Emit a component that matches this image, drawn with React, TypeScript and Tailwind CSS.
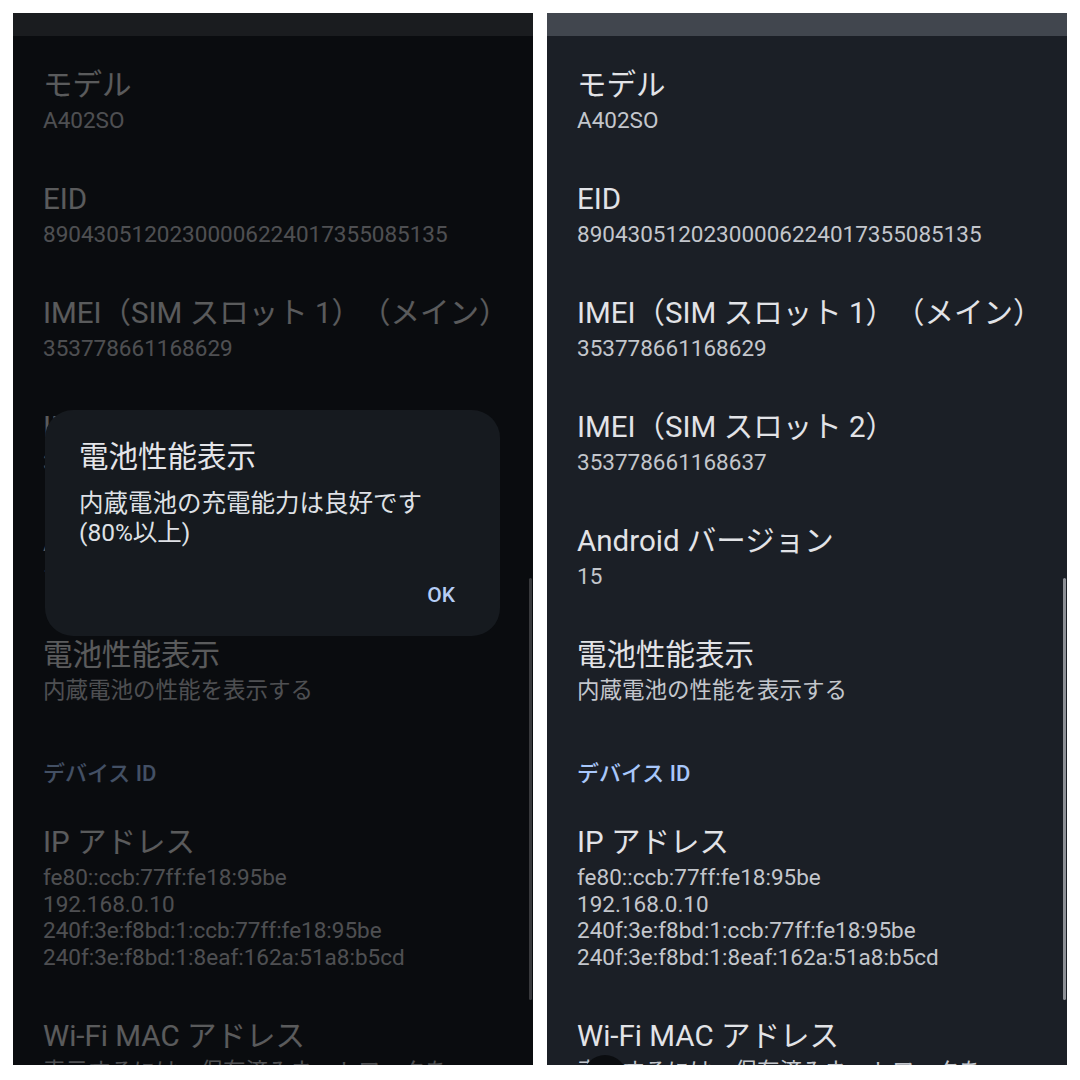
import React from 'react';

interface InfoItem {
  title: string;
  lines: string[];
}

const topItems: InfoItem[] = [
  { title: 'モデル', lines: ['A402SO'] },
  { title: 'EID', lines: ['89043051202300006224017355085135'] },
  { title: 'IMEI（SIM スロット 1）（メイン）', lines: ['353778661168629'] },
  { title: 'IMEI（SIM スロット 2）', lines: ['353778661168637'] },
  { title: 'Android バージョン', lines: ['15'] },
  { title: '電池性能表示', lines: ['内蔵電池の性能を表示する'] },
];

const deviceItems: InfoItem[] = [
  {
    title: 'IP アドレス',
    lines: [
      'fe80::ccb:77ff:fe18:95be',
      '192.168.0.10',
      '240f:3e:f8bd:1:ccb:77ff:fe18:95be',
      '240f:3e:f8bd:1:8eaf:162a:51a8:b5cd',
    ],
  },
  { title: 'Wi-Fi MAC アドレス', lines: ['表示するには、保存済みネットワークを'] },
];

function Item({ item }: { item: InfoItem }) {
  return (
    <div className="pt-[22px] pb-[24.5px]">
      <div className="text-[29.5px] leading-[38px] text-[#e2e3e7] whitespace-nowrap [text-spacing-trim:space-all]">
        {item.title}
      </div>
      <div className="pt-[3px] text-[22.5px] leading-[26.5px] text-[#c3c6cc]">
        {item.lines.map(line => (
          <div key={line} className="whitespace-nowrap">{line}</div>
        ))}
      </div>
    </div>
  );
}

function AboutScreen() {
  return (
    <>
      <div className="h-[23px] bg-[#41464e]" />
      <div className="px-[30px] pt-[8px]">
        {topItems.map(item => (
          <Item key={item.title} item={item} />
        ))}
        <div className="pt-[30px] pb-[11px] text-[22px] leading-[32px] font-medium text-[#a8c7fa]">
          デバイス ID
        </div>
        {deviceItems.map(item => (
          <Item key={item.title} item={item} />
        ))}
      </div>
      {/* overlay scrollbar */}
      <div className="absolute right-[1px] top-[565px] w-[3px] h-[422px] rounded-full bg-[#8d9096]" />
    </>
  );
}

export default function App() {
  return (
    <div className="w-[1080px] h-[1080px] bg-white flex gap-[14px] pl-[13px] pt-[13px] font-['Roboto','Noto_Sans_CJK_JP',sans-serif]">
      {/* left: dialog open over dimmed screen */}
      <div className="relative w-[520px] h-[1052px] overflow-hidden bg-[#1b1f26]">
        <AboutScreen />
        <div className="absolute inset-0 bg-black/60" />
        <div className="absolute left-[32px] top-[397px] w-[455px] rounded-[28px] bg-[#161a1f] pl-[34px] pr-[45px] pt-[29px] pb-[29px]">
          <div className="text-[29.5px] leading-[36px] text-[#e4e5e9]">電池性能表示</div>
          <div className="mt-[13.5px] text-[24.5px] leading-[29px] text-[#dfe1e6]">
            内蔵電池の充電能力は良好です
            <br />
            (80%以上)
          </div>
          <div className="mt-[36.5px] flex justify-end">
            <span className="text-[21px] leading-[24px] font-medium text-[#b5cdf5]">OK</span>
          </div>
        </div>
      </div>

      {/* right: plain screen */}
      <div className="relative w-[520px] h-[1052px] overflow-hidden bg-[#1b1f26]">
        <AboutScreen />
        <div className="absolute left-[36px] top-[1042px] w-[44px] h-[44px] rounded-full bg-[#0b0d10]" />
      </div>
    </div>
  );
}
